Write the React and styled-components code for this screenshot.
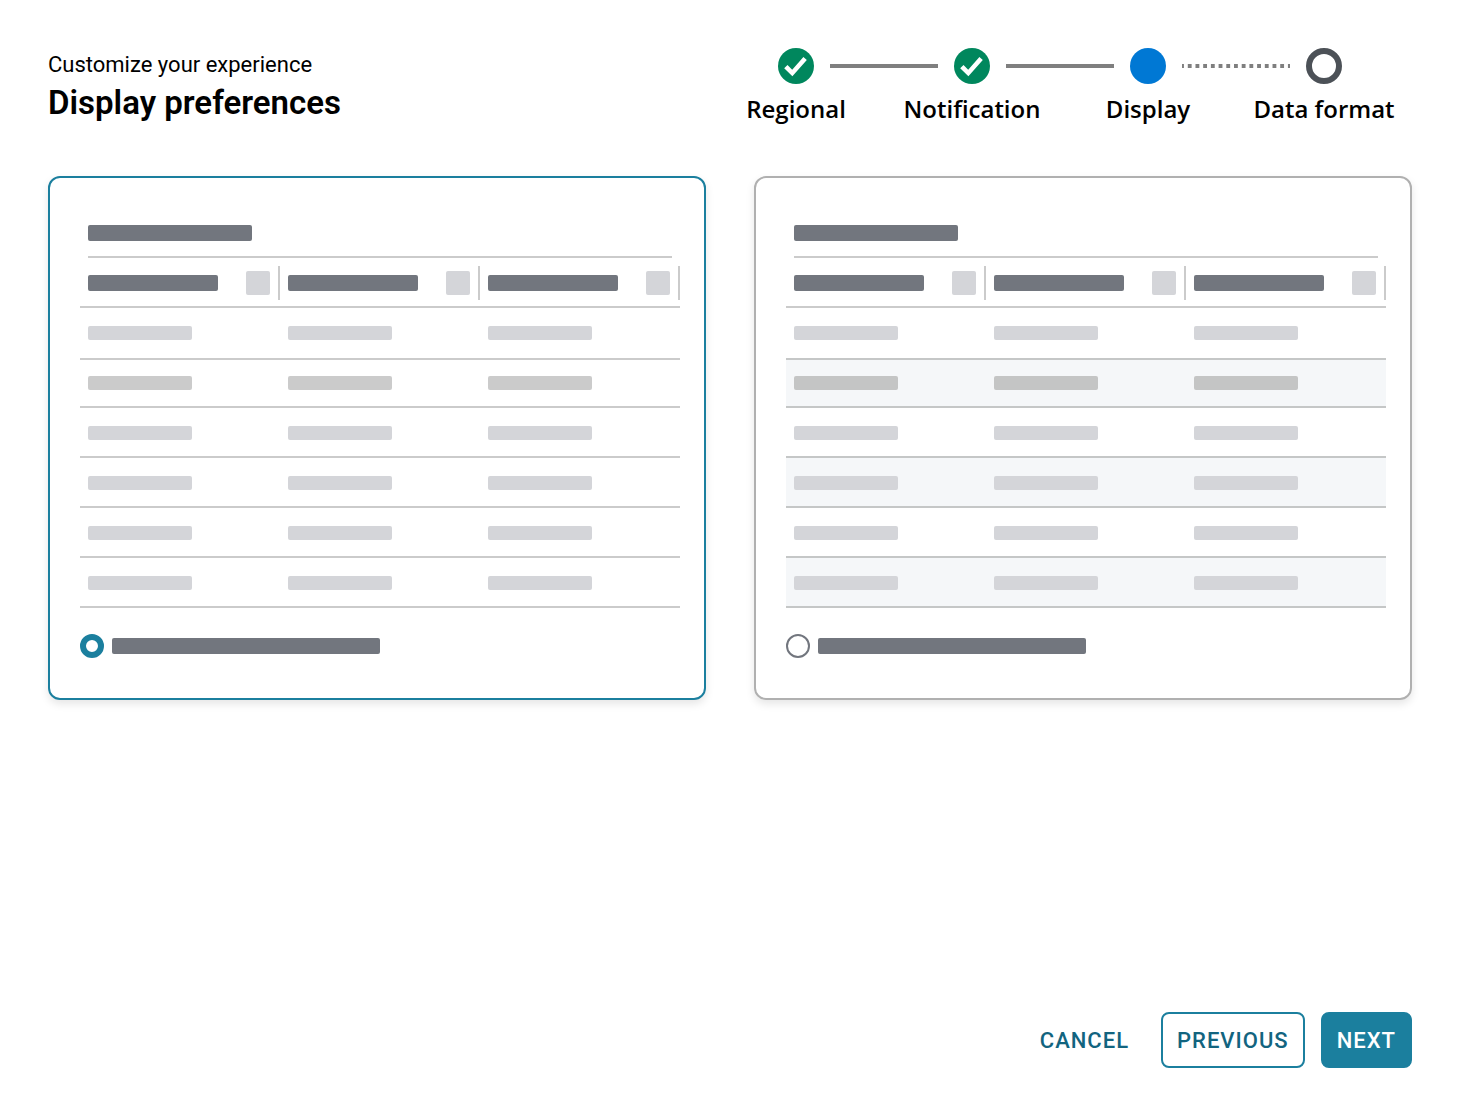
import { useState } from "react";
import styled, { createGlobalStyle } from "styled-components";

const GlobalStyle = createGlobalStyle`
  * {
    box-sizing: border-box;
  }

  body {
    margin: 0;
    background-color: #fff;
    color: #000;
    font-family: Roboto, "Open Sans", sans-serif;
  }
`;

const Page = styled.div`
  min-height: 100vh;
  padding: 48px;
  display: flex;
  flex-direction: column;
`;

const Header = styled.header`
  display: flex;
  justify-content: space-between;
  align-items: flex-start;
  margin-bottom: 48px;

  .intro {
    margin: 0;
    font-size: 22px;
    line-height: 34px;
  }

  .title {
    margin: 0;
    font-size: 33px;
    font-weight: 600;
    line-height: 42px;
  }
`;

const Stepper = styled.ol`
  width: 704px;
  min-height: 80px;
  margin: 0;
  padding: 0;
  list-style: none;
  display: grid;
  grid-template-columns: repeat(4, 1fr);
`;

const Step = styled.li`
  text-align: center;
  font-family: "Open Sans", sans-serif;
  font-size: 24px;
  font-weight: 600;
  line-height: 32px;
  white-space: nowrap;
`;

const Track = styled.div`
  display: grid;
  grid-template-columns: 1fr 36px 1fr;
  align-items: center;
  margin-bottom: 9px;

  svg {
    display: block;
    grid-column: 2;
  }
`;

const solid = "#7f7f7f";
const dotted =
  "linear-gradient(90deg, #7f7f7f 2px, transparent 2px calc(100% - 2px), #7f7f7f calc(100% - 2px))";

// runs from this marker to the next one, 16px clear of both
const Connector = styled.span`
  grid-column: 3;
  width: calc(200% - 32px);
  height: 4px;
  margin-left: 16px;
  background: ${({ $dotted }) => ($dotted ? dotted : solid)};
  background-size: ${({ $dotted }) => ($dotted ? "calc(100% / 14)" : "100%")}
    4px;
`;

const Cards = styled.main`
  display: grid;
  grid-template-columns: 1fr 1fr;
  gap: 48px;
`;

const Card = styled.section`
  padding: 47px 24px 40px 30px;
  border: 2px solid ${({ $selected }) => ($selected ? "#1b7f9e" : "#b0b0b0")};
  border-radius: 12px;
  box-shadow: 0 4px 8px rgba(0, 0, 0, 0.1);
`;

const Bar = styled.span`
  display: block;
  width: ${({ $width }) => $width}px;
  height: 16px;
  border-radius: 2px;
  background-color: #72767e;
`;

const CellBar = styled(Bar)`
  height: 14px;
  background-color: #d4d5d9;
`;

const CardTitle = styled.div`
  margin: 0 8px;
  padding-bottom: 15px;
  border-bottom: 2px solid #cbcbcb;
`;

const Table = styled.table`
  width: 100%;
  table-layout: fixed;
  border-collapse: separate;
  border-spacing: 0;

  th {
    padding: 8px 0 6px 8px;
    border-bottom: 2px solid #cbcbcb;
  }

  td {
    padding: 18px 8px 16px;
    border-bottom: 2px solid ${({ $striped }) => ($striped ? "#c5c7c7" : "#cbcbcb")};
  }

  tbody tr:nth-child(1) td {
    padding-bottom: 18px;
  }

  tbody tr:nth-child(2) td {
    padding-top: 16px;
  }

  tbody tr:nth-child(2) ${CellBar} {
    background-color: ${({ $striped }) => ($striped ? "#c4c5c5" : "#cbcbcb")};
  }

  tbody tr:nth-child(even) {
    background-color: ${({ $striped }) => ($striped ? "#f5f7f9" : "transparent")};
  }
`;

const HeadCell = styled.div`
  height: 34px;
  padding-right: 8px;
  border-right: 2px solid #cbcbcb;
  display: flex;
  justify-content: space-between;
  align-items: center;

  .sort {
    width: 24px;
    height: 24px;
    border-radius: 2px;
    background-color: #d4d5d9;
  }
`;

const Choice = styled.label`
  display: inline-flex;
  align-items: center;
  gap: 8px;
  margin-top: 26px;
  vertical-align: top;
  cursor: pointer;
`;

const Radio = styled.input`
  appearance: none;
  width: 24px;
  height: 24px;
  margin: 0;
  border: 2px solid #72767e;
  border-radius: 50%;
  background-color: #fff;
  cursor: pointer;

  &:checked {
    border: 6px solid #1b7f9e;
  }
`;

const Footer = styled.footer`
  margin-top: auto;
  display: flex;
  justify-content: flex-end;
  gap: 16px;
`;

const Button = styled.button`
  height: 56px;
  padding: 2px 14px 0;
  border: 2px solid transparent;
  border-radius: 8px;
  background-color: transparent;
  color: #12647f;
  font-family: inherit;
  font-size: 22px;
  font-weight: 500;
  line-height: 28px;
  letter-spacing: 1px;
  text-transform: uppercase;
  cursor: pointer;
`;

const OutlineButton = styled(Button)`
  border-color: #1b7f9e;
`;

const PrimaryButton = styled(Button)`
  border-color: #1b7f9e;
  background-color: #1b7f9e;
  color: #fff;
`;

const steps = [
  { name: "Regional", status: "done" },
  { name: "Notification", status: "done" },
  { name: "Display", status: "current" },
  { name: "Data format", status: "todo" },
];

const layouts = [
  { id: "plain", label: "Plain rows", striped: false },
  { id: "striped", label: "Striped rows", striped: true },
];

const columns = [1, 2, 3];
const rows = [1, 2, 3, 4, 5, 6];

const Marker = ({ status }) => (
  <svg width="36" height="36" viewBox="0 0 36 36" aria-hidden="true">
    {status === "done" && (
      <>
        <circle cx="18" cy="18" r="18" fill="#00875d" />
        <path
          d="M6.2 20.3 L9.5 17 L14.2 21.7 L25.4 9 L28.8 12 L14.4 28.2 Z"
          fill="#fff"
        />
      </>
    )}
    {status === "current" && <circle cx="18" cy="18" r="18" fill="#0078d4" />}
    {status === "todo" && (
      <circle
        cx="18"
        cy="18"
        r="15"
        fill="#fff"
        stroke="#4c5157"
        strokeWidth="6"
      />
    )}
  </svg>
);

const Preview = ({ striped }) => (
  <>
    <CardTitle>
      <Bar $width={164} />
    </CardTitle>
    <Table $striped={striped}>
      <thead>
        <tr>
          {columns.map((column) => (
            <th key={column}>
              <HeadCell>
                <Bar $width={130} />
                <span className="sort" />
              </HeadCell>
            </th>
          ))}
        </tr>
      </thead>
      <tbody>
        {rows.map((row) => (
          <tr key={row}>
            {columns.map((column) => (
              <td key={column}>
                <CellBar $width={104} />
              </td>
            ))}
          </tr>
        ))}
      </tbody>
    </Table>
  </>
);

const App = () => {
  const [layout, setLayout] = useState("plain");

  return (
    <>
      <GlobalStyle />
      <Page>
        <Header>
          <div>
            <p className="intro">Customize your experience</p>
            <h1 className="title">Display preferences</h1>
          </div>
          <Stepper>
            {steps.map(({ name, status }, index) => (
              <Step
                key={name}
                aria-current={status === "current" ? "step" : undefined}
              >
                <Track>
                  <Marker status={status} />
                  {index < steps.length - 1 && (
                    <Connector $dotted={status !== "done"} />
                  )}
                </Track>
                {name}
              </Step>
            ))}
          </Stepper>
        </Header>
        <Cards>
          {layouts.map(({ id, label, striped }) => (
            <Card key={id} $selected={layout === id}>
              <Preview striped={striped} />
              <Choice>
                <Radio
                  type="radio"
                  name="layout"
                  value={id}
                  aria-label={label}
                  checked={layout === id}
                  onChange={() => setLayout(id)}
                />
                <Bar $width={268} />
              </Choice>
            </Card>
          ))}
        </Cards>
        <Footer>
          <Button type="button">Cancel</Button>
          <OutlineButton type="button">Previous</OutlineButton>
          <PrimaryButton type="button">Next</PrimaryButton>
        </Footer>
      </Page>
    </>
  );
};

export default App;
